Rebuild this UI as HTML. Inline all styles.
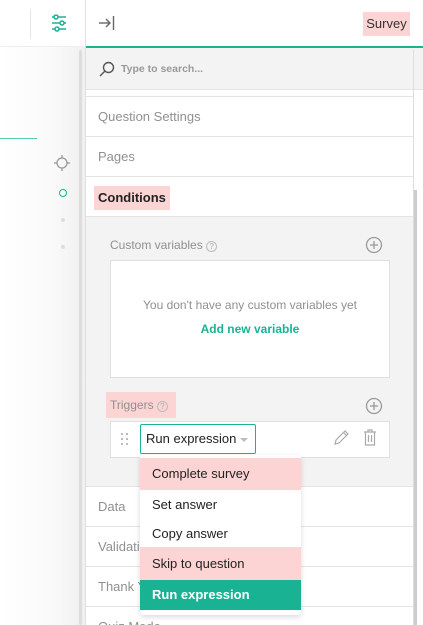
<!DOCTYPE html>
<html><head><style>
*{box-sizing:border-box;margin:0;padding:0}
html,body{width:423px;height:625px;overflow:hidden}
body{background:#fff;font-family:"Liberation Sans",sans-serif;position:relative}
.a{position:absolute}
.row{position:absolute;left:86px;width:327px;height:40px;border-bottom:1px solid #e4e4e4;font-size:13px;color:#909090;padding-left:12px;line-height:40px;background:#fff}
.hl{background:#fcd4d4}
.dd div{height:30px;line-height:30px;padding-left:12px;font-size:13px;color:#222}
</style></head><body>
<div class="a" style="left:0;top:47px;width:85px;height:578px;background:linear-gradient(90deg,#fff 0%,#fafafa 60%,#f0f0f0 100%)"></div>
<div class="a" style="left:0;top:0;width:85px;height:47px;background:#fff;border-bottom:1px solid #eee"></div>
<div class="a" style="left:30px;top:9px;width:1px;height:30px;background:#e6e6e6"></div>
<svg class="a" style="left:51px;top:13px" width="16" height="20" viewBox="0 0 16 20" fill="none" stroke="#19b394" stroke-width="1.5"><line x1="1" y1="4" x2="15" y2="4"/><circle cx="5" cy="4" r="2" fill="#fff"/><line x1="1" y1="10" x2="15" y2="10"/><circle cx="11" cy="10" r="2" fill="#fff"/><line x1="1" y1="16" x2="15" y2="16"/><circle cx="6" cy="16" r="2" fill="#fff"/></svg>
<div class="a" style="left:0;top:138px;width:37px;height:1px;background:#5cc9b0"></div>
<div class="a" style="left:79px;top:50px;width:3px;height:575px;background:#ddd;border-radius:2px"></div>
<svg class="a" style="left:54px;top:155px" width="16" height="16" viewBox="0 0 16 16" fill="none" stroke="#999" stroke-width="1.3"><circle cx="8" cy="8" r="5"/><line x1="8" y1="0" x2="8" y2="3"/><line x1="8" y1="13" x2="8" y2="16"/><line x1="0" y1="8" x2="3" y2="8"/><line x1="13" y1="8" x2="16" y2="8"/></svg>
<div class="a" style="left:59px;top:189px;width:8px;height:8px;border:1.5px solid #19b394;border-radius:50%"></div>
<div class="a" style="left:61px;top:218px;width:4px;height:4px;background:#ddd;border-radius:50%"></div>
<div class="a" style="left:61px;top:245px;width:4px;height:4px;background:#ddd;border-radius:50%"></div>
<div class="a" style="left:85px;top:0;width:1px;height:625px;background:#e0e0e0"></div>
<div class="a" style="left:86px;top:0;width:337px;height:46px;background:#fff"></div>
<svg class="a" style="left:98px;top:15px" width="18" height="16" viewBox="0 0 18 16" fill="none" stroke="#666" stroke-width="1.4"><line x1="1" y1="8" x2="12" y2="8"/><polyline points="8,4 12,8 8,12"/><line x1="15.5" y1="1" x2="15.5" y2="15"/></svg>
<div class="a hl" style="left:363px;top:12px;width:47px;height:24px;font-size:13px;color:#333;line-height:24px;text-align:center">Survey</div>
<div class="a" style="left:86px;top:46px;width:337px;height:2px;background:#19b394"></div>
<div class="a" style="left:86px;top:48px;width:337px;height:42px;background:#f3f3f3;border-bottom:1px solid #e4e4e4"></div>
<svg class="a" style="left:99px;top:61px" width="16" height="16" viewBox="0 0 16 16" fill="none" stroke="#555" stroke-width="1.4"><circle cx="9.5" cy="6.5" r="5"/><line x1="6" y1="10" x2="1" y2="15"/></svg>
<div class="a" style="left:121px;top:63px;font-size:10.5px;font-weight:bold;color:#999">Type to search...</div>
<div class="a" style="left:86px;top:91px;width:327px;height:6px;border-bottom:1px solid #e4e4e4"></div>
<div class="row" style="top:97px">Question Settings</div>
<div class="row" style="top:137px">Pages</div>
<div class="row" style="top:177px;padding-left:8px"><span class="hl" style="display:inline-block;height:24px;line-height:24px;padding:0 4px;color:#222;font-weight:bold;vertical-align:middle">Conditions</span></div>
<div class="a" style="left:86px;top:217px;width:327px;height:270px;background:#f3f3f3;border-bottom:1px solid #e4e4e4"></div>
<div class="a" style="left:110px;top:238px;font-size:12px;color:#909090">Custom variables <span style="display:inline-block;width:11px;height:11px;border:1px solid #bbb;border-radius:50%;font-size:8px;line-height:9px;text-align:center;color:#aaa">?</span></div>
<svg class="a" style="left:365px;top:236px" width="18" height="18" viewBox="0 0 18 18" fill="none" stroke="#999" stroke-width="1.3"><circle cx="9" cy="9" r="7.5"/><line x1="9" y1="5" x2="9" y2="13"/><line x1="5" y1="9" x2="13" y2="9"/></svg>
<div class="a" style="left:110px;top:260px;width:280px;height:118px;background:#fff;border:1px solid #e0e0e0"></div>
<div class="a" style="left:110px;top:298px;width:280px;text-align:center;font-size:12px;color:#909090">You don't have any custom variables yet</div>
<div class="a" style="left:110px;top:322px;width:280px;text-align:center;font-size:12px;font-weight:bold;color:#19b394">Add new variable</div>
<div class="a hl" style="left:106px;top:392px;width:70px;height:26px;font-size:12px;color:#909090;line-height:26px;padding-left:4px">Triggers <span style="display:inline-block;width:11px;height:11px;border:1px solid #bbb;border-radius:50%;font-size:8px;line-height:9px;text-align:center;color:#aaa">?</span></div>
<svg class="a" style="left:365px;top:397px" width="18" height="18" viewBox="0 0 18 18" fill="none" stroke="#999" stroke-width="1.3"><circle cx="9" cy="9" r="7.5"/><line x1="9" y1="5" x2="9" y2="13"/><line x1="5" y1="9" x2="13" y2="9"/></svg>
<div class="a" style="left:110px;top:421px;width:280px;height:37px;background:#fff;border:1px solid #e0e0e0"></div>
<svg class="a" style="left:121px;top:433px" width="8" height="12"><g fill="#bbb"><rect x="0" y="0" width="2" height="2"/><rect x="5" y="0" width="2" height="2"/><rect x="0" y="5" width="2" height="2"/><rect x="5" y="5" width="2" height="2"/><rect x="0" y="10" width="2" height="2"/><rect x="5" y="10" width="2" height="2"/></g></svg>
<div class="a" style="left:140px;top:424px;width:116px;height:30px;border:1.5px solid #19b394;border-radius:2px;background:#fff;font-size:13px;color:#222;line-height:27px;padding-left:5px">Run expression</div>
<div class="a" style="left:240px;top:438px;width:0;height:0;border-left:4px solid transparent;border-right:4px solid transparent;border-top:4px solid #bbb"></div>
<svg class="a" style="left:333px;top:430px" width="16" height="16" viewBox="0 0 16 16" fill="none" stroke="#aaa" stroke-width="1.2"><path d="M2 14 L3 10 L12 1 L15 4 L6 13 Z M10.5 2.5 L13.5 5.5"/></svg>
<svg class="a" style="left:363px;top:429px" width="14" height="17" viewBox="0 0 14 17" fill="none" stroke="#aaa" stroke-width="1.2"><path d="M1 3 H13 M5 3 V1 H9 V3 M2.5 3 V16 H11.5 V3 M5.5 6 V13 M8.5 6 V13"/></svg>
<div class="row" style="top:487px">Data</div>
<div class="row" style="top:527px">Validation</div>
<div class="row" style="top:567px">Thank You Page</div>
<div class="row" style="top:607px">Quiz Mode</div>
<div class="a" style="left:413px;top:50px;width:1px;height:575px;background:#ddd"></div>
<div class="a" style="left:414px;top:190px;width:3px;height:435px;background:#ccc"></div>
<div class="a dd" style="left:140px;top:455px;width:161px;height:160px;background:#fff;box-shadow:0 2px 6px rgba(0,0,0,.15);border-radius:3px;padding-top:3px">
<div class="hl" style="height:32px;line-height:32px">Complete survey</div>
<div>Set answer</div>
<div style="height:27px;line-height:28px">Copy answer</div>
<div class="hl" style="height:33px;line-height:34px">Skip to question</div>
<div style="background:#19b394;color:#fff;font-weight:bold">Run expression</div>
</div>
</body></html>
